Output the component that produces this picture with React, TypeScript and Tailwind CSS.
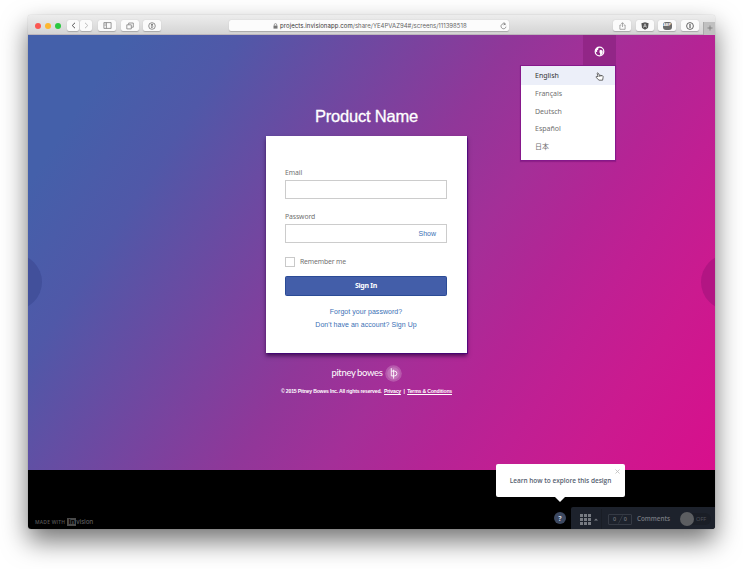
import type { ReactNode } from "react";

const languages = ["Français", "Deutsch", "Español", "日本"];

function ToolButton({ children, width = "w-[18px]" }: { children: ReactNode; width?: string }) {
  return (
    <div className={`flex h-[11px] items-center justify-center rounded-[2px] bg-[#fbfbfb] shadow-[0_0.5px_1px_rgba(0,0,0,0.22)] ${width}`}>
      {children}
    </div>
  );
}

function BrowserBar() {
  return (
    <header className="flex h-5 shrink-0 items-start rounded-t-[3px] border-b border-[#bdb6bc] bg-linear-to-b from-[#ededed] to-[#d4d4d4] pl-[7px] pt-[5px]">
      <div className="flex h-[11px] items-center gap-1">
        <i className="size-[6px] rounded-full bg-[#fb5752]" />
        <i className="size-[6px] rounded-full bg-[#fdb730]" />
        <i className="size-[6px] rounded-full bg-[#2bc840]" />
      </div>
      <div className="ml-[6px] flex gap-px">
        <ToolButton width="w-[12px]">
          <svg width="5" height="7" viewBox="0 0 5 7" fill="none" stroke="#555"><path d="M4 .8 1.2 3.5 4 6.2" /></svg>
        </ToolButton>
        <ToolButton width="w-[12px]">
          <svg width="5" height="7" viewBox="0 0 5 7" fill="none" stroke="#bbb"><path d="M1 .8 3.8 3.5 1 6.2" /></svg>
        </ToolButton>
      </div>
      <div className="ml-[6px] flex gap-[4.5px]">
        <ToolButton>
          <svg width="9" height="7" viewBox="0 0 9 7" fill="none" stroke="#808080" strokeWidth=".8"><path d="M.9.6h7.2v5.8H.9zM3.4.6v5.8M1.6 2h1M1.6 3.3h1" /></svg>
        </ToolButton>
        <ToolButton>
          <svg width="8" height="8" viewBox="0 0 8 8" fill="none" stroke="#808080" strokeWidth=".8"><path d="M2.7 2.7V1h4.6v4.2H5.4M.8 2.8h4.5v4.1H.8z" /></svg>
        </ToolButton>
        <ToolButton>
          <svg width="8" height="8" viewBox="0 0 8 8" fill="none" stroke="#777" strokeWidth=".8"><circle cx="4" cy="4" r="3.3" /><path d="M4 2v3.6M2.9 4.6 4 5.7l1.1-1.1" /><circle cx="4" cy="2.7" r=".6" fill="#777" /></svg>
        </ToolButton>
      </div>
      <div className="ml-[68px] flex h-[11px] w-[280px] items-center rounded-[2px] bg-[#fcfcfc] shadow-[0_0.5px_1px_rgba(0,0,0,0.22)]">
        <svg className="ml-[44px]" width="5" height="6" viewBox="0 0 5 6"><path d="M.5 2.6h4V5.6h-4z" fill="#777" /><path d="M1.3 2.7V1.8a1.2 1.2 0 0 1 2.4 0v.9" fill="none" stroke="#777" strokeWidth=".7" /></svg>
        <span className="ml-[2px] w-[200px] whitespace-nowrap pt-[1px] font-['Inter',sans-serif] text-[6px] leading-[10px] tracking-[0.01px] text-[#666]">
          <span className="tracking-[0.08px] text-[#333]">projects.invisionapp.com</span>/share/YE4PVAZ94#/screens/111398518
        </span>
        <svg className="ml-auto mr-[2px]" width="7" height="8" viewBox="0 0 7 8" fill="none" stroke="#777" strokeWidth=".8"><path d="M5.8 3.2A2.5 2.5 0 1 0 6 4.7M3.6.5l1.7 1.2-1.5 1.4" /></svg>
      </div>
      <div className="ml-auto flex gap-[4.5px]">
        <ToolButton>
          <svg width="7" height="8" viewBox="0 0 7 8" fill="none" stroke="#888" strokeWidth=".7"><path d="M2.3 3H.9v4.3h5.2V3H4.7M3.5 5V.7M2.2 2 3.5.7 4.8 2" /></svg>
        </ToolButton>
        <ToolButton>
          <svg width="8" height="8" viewBox="0 0 8 8"><path d="m.4 1.3 3.6-1 3.6 1L7 6.1 4 7.8 1 6.1z" fill="#555" /><path d="m2.5 5.5 1.5-3.7 1.5 3.7M3.1 4.4h1.8" fill="none" stroke="#ddd" strokeWidth=".7" /></svg>
        </ToolButton>
        <ToolButton>
          <span className="flex h-[8px] w-[9px] items-center justify-center rounded-[3px] bg-[#6b6b6b] pt-px font-['Liberation_Sans',sans-serif] text-[3.6px] font-bold leading-none text-white">ABP</span>
        </ToolButton>
        <ToolButton>
          <svg width="8" height="8" viewBox="0 0 8 8" fill="none" stroke="#555" strokeWidth=".9"><circle cx="4" cy="4" r="3.4" /><path d="M4 2v4M3.4 2.6H4M4 5.4h.6" strokeWidth="1.1" /></svg>
        </ToolButton>
      </div>
      <div className="ml-[4.5px] mt-[2px] flex h-[12.5px] w-[12px] items-center justify-center border-l border-[#aaa] bg-[#c0c0c0]">
        <svg width="6" height="6" viewBox="0 0 6 6" stroke="#777" strokeWidth=".8"><path d="M3 .5v5M.5 3h5" /></svg>
      </div>
    </header>
  );
}

function LanguageMenu() {
  return (
    <div className="absolute right-[99px] top-0 flex w-[96px] flex-col items-end font-['Noto_Sans','Noto_Sans_CJK_JP',sans-serif] text-[7px] text-[#707070]">
      <div className="flex h-[30px] w-[33.5px] items-center justify-center bg-[#922687] pt-[2px]">
        <svg width="11" height="11" viewBox="0 0 10 10"><circle cx="5" cy="5" r="3.9" fill="none" stroke="#fff" strokeWidth="1.1" /><path d="M1 4.5C1.3 2.2 3 .8 4.6.9l.2.8-1 .6v1.2l-1.1.5.3 1-.7.7zM5 4.2l1.2-.7 1.7.8v2.2L6.5 8.5l-.9-.4-.1-1.5-.5-.6z" fill="#fff" /></svg>
      </div>
      <ul className="h-[96px] w-full border border-[#86188b] bg-white shadow-[0_1px_1px_rgba(90,0,100,0.3)]">
        <li className="flex h-[19px] items-center justify-between bg-[#eceff9] pl-[14px] pr-[11px] pt-[1px] text-[#333]">
          <span>English</span>
          <svg width="9" height="9" viewBox="0 0 9 9" fill="#fff" stroke="#444" strokeWidth=".8" strokeLinejoin="round"><path d="M3.1 4.5 2.2 1.7C2 .8 3 .5 3.4 1.3l.9 1.9 2.8.4c.9.2 1.2.9 1 1.8L7.6 8.2H4L1.1 5.4c-.5-.6.3-1.2.9-.8z" /><path d="M4.4 3.3v1.4M5.9 3.5v1.1" /></svg>
        </li>
        {languages.map((language) => (
          <li key={language} className="flex h-[17.6px] items-center pl-[14px] pt-[1px]">{language}</li>
        ))}
      </ul>
    </div>
  );
}

function SignInCard() {
  return (
    <form className="mt-[10px] flex h-[217px] w-[201px] shrink-0 flex-col bg-white pl-[19px] pr-[20px] pt-[32px] font-['Noto_Sans',sans-serif] text-[6.8px] leading-[10px] text-[#707070] shadow-[0_0_1px_0.5px_rgba(65,0,125,0.7),0_3px_4px_0_rgba(40,0,60,0.7)]">
      <label className="tracking-[-0.08px]">Email</label>
      <div className="mt-[2px] h-[19px] border border-[#ccc]" />
      <label className="mt-[13px] tracking-[-0.08px]">Password</label>
      <div className="mt-[2px] flex h-[19px] items-center justify-end border border-[#ccc] pr-[10px] font-['Liberation_Sans',sans-serif] text-[7px] text-[#3a70b5]">Show</div>
      <div className="mt-[13px] flex items-center gap-[5px]">
        <i className="size-[10px] border border-[#c9c9c9]" />
        <span className="pt-px tracking-[-0.14px]">Remember me</span>
      </div>
      <div className="mt-[9px] flex h-[20px] shrink-0 items-center justify-center rounded-[1.5px] border border-[#2b4b96] bg-[#435ea9] text-[7px] font-bold tracking-[-0.28px] text-white">Sign In</div>
      <div className="mt-[11px] flex flex-col items-center gap-[3px] whitespace-nowrap font-['Liberation_Sans',sans-serif] text-[7px] text-[#3a70b5]">
        <span className="tracking-[0.04px]">Forgot your password?</span>
        <span className="tracking-[0.04px]">Don't have an account? Sign Up</span>
      </div>
    </form>
  );
}

function Footer() {
  return (
    <footer className="flex flex-col items-center text-white">
      <div className="mt-[11px] flex h-[18px] items-center gap-[2px]">
        <span className="whitespace-nowrap pb-px font-['Lato',sans-serif] text-[9.5px] leading-none tracking-[-0.33px]">pitney<span className="ml-[1.5px]">bowes</span></span>
        <svg width="17" height="17" viewBox="0 0 17 17" fill="none">
          <circle cx="8.5" cy="8.5" r="8.3" fill="#fff" fillOpacity=".2" />
          <circle cx="8.5" cy="8.5" r="6.2" fill="#fff" fillOpacity=".15" />
          <path d="M6.3 3.2v7.7M6.3 6.1h3.2a2.4 2.4 0 0 1 0 4.8H6.3M8.6 13.6V4.7" stroke="#fff" strokeWidth=".9" />
        </svg>
      </div>
      <div className="mt-[4px] whitespace-pre font-['Liberation_Sans',sans-serif] text-[5.15px] font-bold leading-[10px] tracking-[-0.2px]">© 2015 Pitney Bowes Inc. All rights reserved.  <u>Privacy</u>  |  <u>Terms &amp; Conditions</u></div>
    </footer>
  );
}

function BottomBar() {
  return (
    <div className="relative flex h-[59px] items-end justify-between overflow-visible rounded-b-[3px] bg-black">
      <div className="mb-[2px] ml-[7px] flex h-[10px] items-center font-['Open_Sans',sans-serif] text-[#555]">
        <span className="pt-px text-[5px] font-semibold tracking-[0.2px]">MADE WITH</span>
        <b className="ml-[2px] flex h-[8px] w-[9px] items-center justify-center bg-[#4a4a4a] pb-px text-[7px] leading-none text-black">in</b>
        <span className="text-[6.3px] font-semibold tracking-[-0.15px]">vision</span>
      </div>
      <div className="flex items-center">
        <span className="mr-[5px] flex size-[12px] items-center justify-center rounded-full bg-[#3c4860] font-['Open_Sans',sans-serif] text-[7px] font-bold leading-none text-[#d6dae2]">?</span>
        <div className="flex h-[22px] w-[144px] items-center rounded-br-[3px] rounded-tl-[2px] bg-[#1d222c] pt-[2px] font-['Open_Sans',sans-serif]">
          <div className="flex h-full w-[31px] items-center gap-[3px] border-r border-[#191d25] pl-[9px]">
            <span className="grid grid-cols-3 gap-[1px]">
              {Array.from({ length: 9 }, (_, cell) => <i key={cell} className="size-[3px] bg-[#777b82]" />)}
            </span>
            <svg width="4" height="3" viewBox="0 0 4 3"><path d="m0 2.5 2-2 2 2z" fill="#777b82" /></svg>
          </div>
          <div className="ml-[6px] flex h-[11px] w-[24px] items-center justify-between rounded-[1px] border border-[#353a44] px-[4px] text-[5.5px] font-semibold text-[#6b6e75]">
            <span>0</span>
            <svg width="5" height="9" viewBox="0 0 5 9" stroke="#40454e" strokeWidth=".7"><path d="M.5 8.5 4.5.5" /></svg>
            <span>0</span>
          </div>
          <span className="ml-[5px] w-[34px] text-[6.3px] font-semibold text-[#777a80]">Comments</span>
          <div className="ml-[9px] flex h-[12px] w-[31px] items-center gap-[2px] rounded-full bg-[#1a1e26] text-[5.7px] text-[#50545c]"><i className="size-[14px] shrink-0 rounded-full bg-[#5c5e61]" />OFF</div>
        </div>
      </div>
      <div className="absolute right-[90px] top-[-6px] flex h-[33px] w-[129px] items-center justify-center rounded-[2px] bg-white font-['Open_Sans',sans-serif] text-[6.5px] font-semibold text-[#566170]">
        <span className="tracking-[-0.02px]">Learn how to explore this design</span>
        <svg className="absolute right-[5px] top-[5px]" width="5" height="5" viewBox="0 0 5 5" stroke="#bbb" strokeWidth=".8"><path d="m.5.5 4 4M4.5.5l-4 4" /></svg>
        <svg className="absolute left-[59px] top-[33px]" width="10" height="5" viewBox="0 0 10 5"><path d="M0 0h10L5 5z" fill="#fff" /></svg>
      </div>
    </div>
  );
}

export default function App() {
  return (
    <div className="h-[569px] w-[743px] overflow-hidden bg-white px-[28px] pt-[15px]">
      <div className="flex h-[514px] w-[687px] flex-col rounded-[3px] shadow-[0_0_1px_rgba(0,0,0,0.35),0_12px_26px_rgba(0,0,0,0.55)]">
        <BrowserBar />
        <main className="relative flex h-[435px] flex-col items-center overflow-hidden bg-[linear-gradient(123deg,#4460aa_10%,#5058a8_22%,#903799_50%,#a42f98_60%,#b52495_70%,#c01f93_77%,#cb1a8f_86%,#d80f8c_100%)] pr-[10px]">
          <i className="absolute left-[-42px] top-[219px] size-[56px] rounded-full bg-[#42509b]" />
          <i className="absolute right-[-42px] top-[219px] size-[56px] rounded-full bg-[#b21583]" />
          <LanguageMenu />
          <h1 className="mt-[71px] h-5 font-['Liberation_Sans',sans-serif] text-[16.5px] leading-5 tracking-[-0.2px] text-white [-webkit-text-stroke:0.3px_white]">Product Name</h1>
          <SignInCard />
          <Footer />
        </main>
        <BottomBar />
      </div>
    </div>
  );
}
